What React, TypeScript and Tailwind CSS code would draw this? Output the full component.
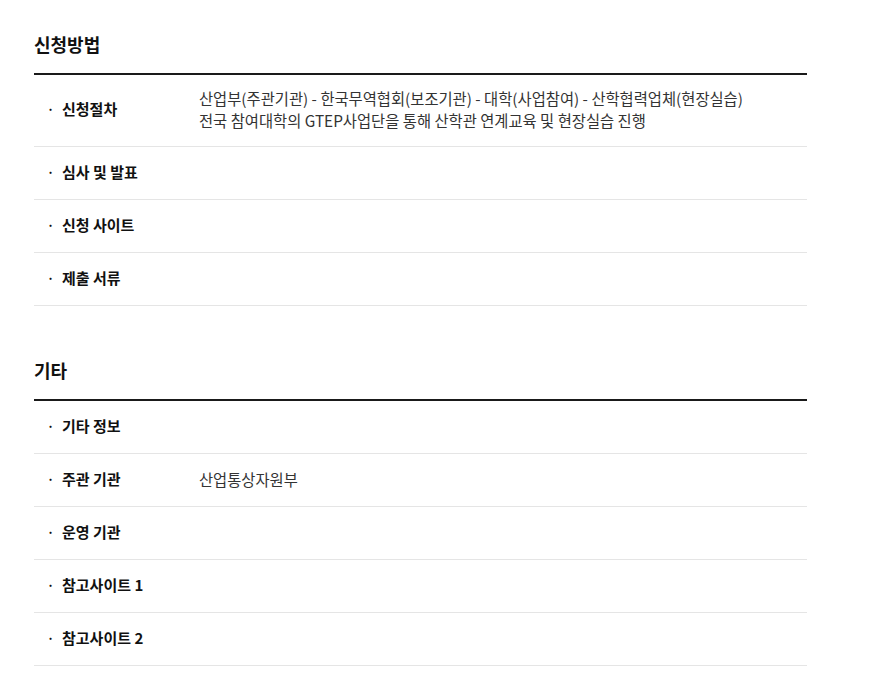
import React from "react";

type Row = { label: string; value?: string[] };

const sections: { title: string; rows: Row[] }[] = [
  {
    title: "신청방법",
    rows: [
      {
        label: "신청절차",
        value: [
          "산업부(주관기관) - 한국무역협회(보조기관) - 대학(사업참여) - 산학협력업체(현장실습)",
          "전국 참여대학의 GTEP사업단을 통해 산학관 연계교육 및 현장실습 진행",
        ],
      },
      { label: "심사 및 발표" },
      { label: "신청 사이트" },
      { label: "제출 서류" },
    ],
  },
  {
    title: "기타",
    rows: [
      { label: "기타 정보" },
      { label: "주관 기관", value: ["산업통상자원부"] },
      { label: "운영 기관" },
      { label: "참고사이트 1" },
      { label: "참고사이트 2" },
    ],
  },
];

export default function App() {
  return (
    <div
      className="min-h-screen bg-white pt-[31px] pl-[34px] text-[#111]"
      style={{ fontFamily: '"Noto Sans CJK KR", "Noto Sans", sans-serif' }}
    >
      <div className="w-[773px] flex flex-col gap-[51px]">
        {sections.map((s) => (
          <section key={s.title}>
            <h2 className="text-[18px] font-bold leading-[26px] mb-[16px] text-[#111]">{s.title}</h2>
            <div className="border-t-2 border-[#1a1a1a]">
              {s.rows.map((r) => (
                <div key={r.label} className="flex items-center border-b border-[#e5e5e5] min-h-[53px] pt-[12px] pb-[15px]">
                  <div className="w-[165px] shrink-0 flex items-center pl-[13px] text-[15px] font-bold leading-[24px]">
                    <span className="w-[15px] text-[12px]">·</span>
                    <span>{r.label}</span>
                  </div>
                  {r.value && (
                    <div className="text-[15.35px] leading-[22px] text-[#333]">
                      {r.value.map((v) => (
                        <p key={v}>{v}</p>
                      ))}
                    </div>
                  )}
                </div>
              ))}
            </div>
          </section>
        ))}
      </div>
    </div>
  );
}
